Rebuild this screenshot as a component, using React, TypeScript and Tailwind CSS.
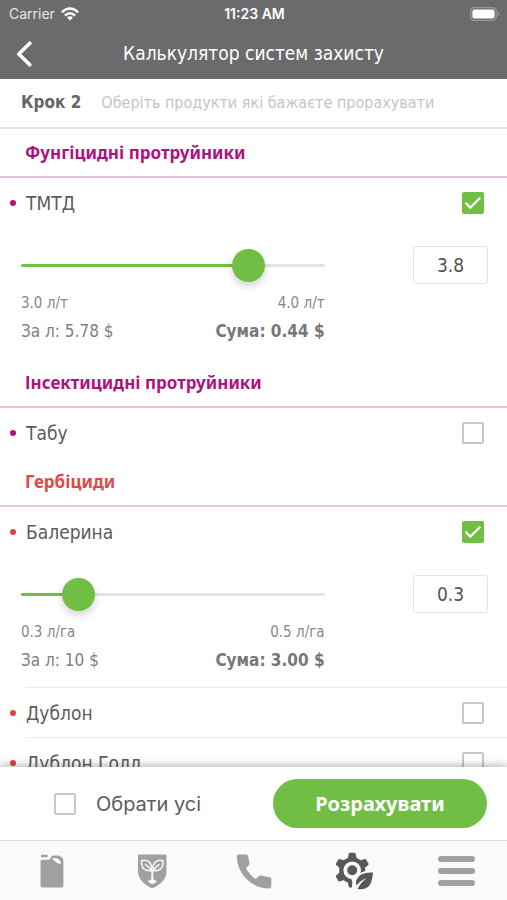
import { useState } from "react";
import type { ReactNode } from "react";

type Product = {
  id: string;
  name: string;
  dose?: { min: number; max: number; initial: number; unit: string; price: string; total: string };
};

type Group = { title: string; text: string; line: string; dot: string; products: Product[] };

const groups: Group[] = [
  {
    title: "Фунгіцидні протруйники",
    text: "text-[#b0127b]",
    line: "border-[#e8bcdb]",
    dot: "bg-[#b0127b]",
    products: [
      { id: "tmtd", name: "ТМТД", dose: { min: 3, max: 4, initial: 3.78, unit: "л/т", price: "5.78 $", total: "0.44 $" } },
    ],
  },
  {
    title: "Інсектицидні протруйники",
    text: "text-[#b0127b]",
    line: "border-[#e8bcdb]",
    dot: "bg-[#b0127b]",
    products: [{ id: "tabu", name: "Табу" }],
  },
  {
    title: "Гербіциди",
    text: "text-[#dc4b48]",
    line: "border-[#f3c9c9]",
    dot: "bg-[#dc4343]",
    products: [
      { id: "balerina", name: "Балерина", dose: { min: 0.3, max: 0.5, initial: 0.33, unit: "л/га", price: "10 $", total: "3.00 $" } },
      { id: "dublon", name: "Дублон" },
      { id: "dublon-gold", name: "Дублон Голд" },
    ],
  },
];

function Checkbox({ id, checked, onChange }: { id: string; checked: boolean; onChange: (v: boolean) => void }) {
  return (
    <span className="relative flex size-[22px] shrink-0">
      <input
        id={id}
        type="checkbox"
        checked={checked}
        onChange={(e) => onChange(e.target.checked)}
        className="peer size-full appearance-none rounded-[2px] border-2 border-[#c8c8c8] bg-white checked:border-[#70bf44] checked:bg-[#70bf44]"
      />
      <svg viewBox="0 0 22 22" className="pointer-events-none absolute inset-0 hidden peer-checked:block" fill="none" stroke="#fff" strokeWidth="2.2">
        <path d="M3.5 10.8 8.3 15.6 18.3 5.8" />
      </svg>
    </span>
  );
}

function DoseControl({ name, dose }: { name: string; dose: NonNullable<Product["dose"]> }) {
  const [value, setValue] = useState(dose.initial);
  const percent = ((value - dose.min) / (dose.max - dose.min)) * 100;

  return (
    <div className="flex h-[131px] items-start justify-between pr-[19px] pl-[21px]">
      <div className="w-[65%] pt-5">
        <input
          type="range"
          aria-label={`${name}, ${dose.unit}`}
          min={dose.min}
          max={dose.max}
          step={0.01}
          value={value}
          onChange={(e) => setValue(Number(e.target.value))}
          style={{ backgroundImage: `linear-gradient(to right, #70bf44 ${percent}%, #e3e3e3 ${percent}%)` }}
          className="my-4 block h-[3px] w-full appearance-none rounded-full [&::-webkit-slider-thumb]:size-[33px] [&::-webkit-slider-thumb]:appearance-none [&::-webkit-slider-thumb]:rounded-full [&::-webkit-slider-thumb]:bg-[#70bf44] [&::-webkit-slider-thumb]:shadow-[0_4px_8px_rgba(0,0,0,0.18)]"
        />
        <div className="flex justify-between pt-2.5 text-[15px] leading-5 text-[#888]">
          <span>{dose.min.toFixed(1)} {dose.unit}</span>
          <span>{dose.max.toFixed(1)} {dose.unit}</span>
        </div>
        <div className="flex justify-between pt-1.5 text-[17px] leading-6 text-[#808080]">
          <span>За л: {dose.price}</span>
          <strong className="font-bold text-[#777]">Сума: {dose.total}</strong>
        </div>
      </div>
      <input
        type="text"
        inputMode="decimal"
        aria-label={name}
        readOnly
        value={value.toFixed(1)}
        className="mt-[18px] h-[38px] w-[75px] rounded-[3px] border border-[#e4e4e4] bg-white text-center text-[19px] text-[#555]"
      />
    </div>
  );
}

function Tab({ label, children }: { label: string; children: ReactNode }) {
  return (
    <button type="button" aria-label={label} className="flex flex-1 items-center justify-center">
      {children}
    </button>
  );
}

function CanisterIcon() {
  return (
    <svg viewBox="0 0 40 40" className="size-10" fill="#a0a0a0">
      <rect x="10" y="3.7" width="6.6" height="2.5" rx=".5" />
      <path d="M9.5 10.5Q9.5 8.7 11.5 8.7H17.5Q19.4 8.5 20 6.3 20.5 4.6 22.3 4.6H26.5Q32.3 5 32.4 10.5V34.5Q32.4 36.5 30.5 36.5H11.5Q9.5 36.5 9.5 34.5Z" />
      <path d="M21 7.6Q22.2 6.5 25.5 7.2 29.5 8.5 30 12.4 28.5 13.2 26 11.8 22.5 9.5 21 7.6Z" fill="#fafafa" />
    </svg>
  );
}

function ShieldIcon() {
  return (
    <svg viewBox="0 0 40 40" className="size-10" fill="none" stroke="#fafafa" strokeWidth="1.5" strokeLinejoin="round">
      <path d="M7 3.5H33.5Q34.5 3.5 34.5 4.5V20Q34.5 31 20.2 37.3 6 31 6 20V4.5Q6 3.5 7 3.5Z" fill="#a0a0a0" stroke="none" />
      <path d="M9.6 9.8Q14.5 8 17.7 11.5 20.2 14.7 19.4 19.6 13 20.3 10.6 16.4 9.1 13.5 9.6 9.8ZM13 13.2Q17 15.5 19.6 20" />
      <path d="M31 9.8Q26.1 8 22.9 11.5 20.4 14.7 21.2 19.6 27.6 20.3 30 16.4 31.5 13.5 31 9.8ZM27.6 13.2Q23.6 15.5 21 20" />
      <path d="M20.3 19V30" strokeWidth="2" />
      <path d="M15.5 30.8Q17 28.3 20.3 28.3T25 30.8L20.3 33.3Z" fill="#fafafa" stroke="none" />
    </svg>
  );
}

function PhoneIcon() {
  return (
    <svg viewBox="0 0 40 40" className="size-10" fill="#a0a0a0">
      <path d="M4.5 3.5H12.3Q13.8 3.5 14 5.1L15.6 12.6Q15.7 13.6 14.9 14.3L11.8 17Q15.5 24 21.6 28L25.2 24.9Q26 24.3 27 24.5L35.8 26.2Q37.3 26.6 37.3 28V35.5Q37.3 37.5 35.3 37.5 22 37.8 12 27.5 3 18 2.8 5.5 2.8 3.5 4.5 3.5Z" />
    </svg>
  );
}

function GearLeafIcon() {
  return (
    <svg viewBox="0 0 40 40" className="size-10" fill="#58585a">
      <circle cx="17.2" cy="19.2" r="13" />
      {[0, 60, 120, 180, 240, 300].map((angle) => (
        <path key={angle} d="M12.6 8 13.8 2.7Q14 1.8 14.8 1.8H19.6Q20.4 1.8 20.6 2.7L21.8 8Z" transform={`rotate(${angle} 17.2 19.2)`} />
      ))}
      <circle cx="17.2" cy="19.2" r="8.8" fill="#fafafa" />
      <circle cx="17.2" cy="19.2" r="5" />
      <path d="M16 27.4Q18.3 30 16.6 38H24L39 31V20Q29 18 23 24Z" fill="#fafafa" />
      <path d="M38 21.6Q28.5 21.2 24 25.2 19.6 29.4 21.6 34.6 25 29.4 31.5 27.2 25.6 31.4 22.6 38 30.6 39.2 34.6 34.2 37.2 30.7 38 21.6Z" />
    </svg>
  );
}

export default function App() {
  const [selected, setSelected] = useState<string[]>(["tmtd", "balerina"]);
  const ids = groups.flatMap((g) => g.products.map((p) => p.id));

  const toggle = (id: string, on: boolean) =>
    setSelected((prev) => (on ? [...prev, id] : prev.filter((x) => x !== id)));

  return (
    <div className="flex h-screen flex-col overflow-hidden bg-white font-['DejaVu_Sans_Condensed','Noto_Sans',sans-serif] text-[#5c5c5c]">
      <header className="shrink-0 bg-[#6b6b6d] text-white">
        <div className="grid h-7 grid-cols-3 items-center pr-[7px] pl-[9px] font-['Inter',sans-serif] text-sm">
          <span className="flex items-center gap-1.5 text-[#e6e6e6]">
            Carrier
            <svg viewBox="0 0 18 14" className="h-[14px] w-[18px]" fill="none" stroke="#fff" strokeWidth="2.4">
              <path d="M.9 5.3Q9-2.2 17.1 5.3M3.9 8.5Q9 3.8 14.1 8.5" />
              <path d="M9 13.5 6 10.4Q9 7.9 12 10.4Z" fill="#fff" stroke="none" />
            </svg>
          </span>
          <span className="text-center font-semibold">11:23 AM</span>
          <svg viewBox="0 0 30 14" className="h-[14px] w-[30px] justify-self-end" fill="none">
            <rect x=".7" y=".7" width="25.6" height="12.6" rx="3.5" stroke="#98989a" strokeWidth="1.2" />
            <rect x="2.4" y="2.4" width="22.2" height="9.2" rx="2" fill="#fff" />
            <path d="M27.7 4.7Q29.6 5.4 29.6 7T27.7 9.3Z" fill="#98989a" />
          </svg>
        </div>
        <div className="flex h-[51px] items-center px-4">
          <button type="button" aria-label="Назад" className="flex w-8">
            <svg viewBox="0 0 16 26" className="h-[26px] w-4" fill="none" stroke="#fff" strokeWidth="3.6" strokeLinecap="round" strokeLinejoin="round">
              <path d="M13.8 2.2 2.8 13 13.8 23.8" />
            </svg>
          </button>
          <h1 className="flex-1 pr-8 text-center text-[19px]">Калькулятор систем захисту</h1>
        </div>
      </header>

      <div className="flex h-[50px] shrink-0 items-center gap-5 border-b-2 border-[#e4e4e6] pl-[21px]">
        <span className="text-[17px] font-bold text-[#666]">Крок 2</span>
        <span className="text-base text-[#c3c5c8]">Оберіть продукти які бажаєте прорахувати</span>
      </div>

      <main className="min-h-0 flex-1 overflow-y-auto [scrollbar-width:none]">
        {groups.map((group) => (
          <section key={group.title}>
            <h2 className={`flex h-[49px] items-center border-b-2 pl-[25px] font-['Noto_Sans',sans-serif] text-[17px] font-bold ${group.text} ${group.line}`}>
              {group.title}
            </h2>
            <ul>
              {group.products.map((product, i) => (
                <li key={product.id}>
                  {i > 0 && <div className="-mt-px ml-[26px] h-px bg-[#e9e9e9]" />}
                  <div className="flex h-[50px] items-center pr-[23px] pl-[10px]">
                    <span className={`mr-2.5 size-1.5 rounded-full ${group.dot}`} />
                    <label htmlFor={product.id} className="flex-1 text-[19px]">{product.name}</label>
                    <Checkbox id={product.id} checked={selected.includes(product.id)} onChange={(on) => toggle(product.id, on)} />
                  </div>
                  {product.dose && <DoseControl name={product.name} dose={product.dose} />}
                </li>
              ))}
            </ul>
          </section>
        ))}
      </main>

      <div className="relative flex h-[73px] shrink-0 items-center justify-between bg-white pr-5 pl-[54px] shadow-[0_-2px_8px_rgba(0,0,0,0.28)]">
        <div className="flex items-center gap-5">
          <Checkbox id="all" checked={selected.length === ids.length} onChange={(on) => setSelected(on ? ids : [])} />
          <label htmlFor="all" className="font-['Inter',sans-serif] text-xl">Обрати усі</label>
        </div>
        <button type="button" className="h-[49px] w-[214px] rounded-full bg-[#70bf44] font-['Noto_Sans',sans-serif] text-xl font-bold text-white">
          Розрахувати
        </button>
      </div>

      <nav className="relative flex h-[60px] shrink-0 border-t border-[#dcdcdc] bg-[#fafafa]">
        <Tab label="Продукти"><CanisterIcon /></Tab>
        <Tab label="Захист"><ShieldIcon /></Tab>
        <Tab label="Контакти"><PhoneIcon /></Tab>
        <Tab label="Калькулятор"><GearLeafIcon /></Tab>
        <Tab label="Меню">
          <span className="flex w-[37px] flex-col gap-1.5">
            <span className="h-1.5 rounded-full bg-[#a0a0a0]" />
            <span className="h-1.5 rounded-full bg-[#a0a0a0]" />
            <span className="h-1.5 rounded-full bg-[#a0a0a0]" />
          </span>
        </Tab>
      </nav>
    </div>
  );
}
